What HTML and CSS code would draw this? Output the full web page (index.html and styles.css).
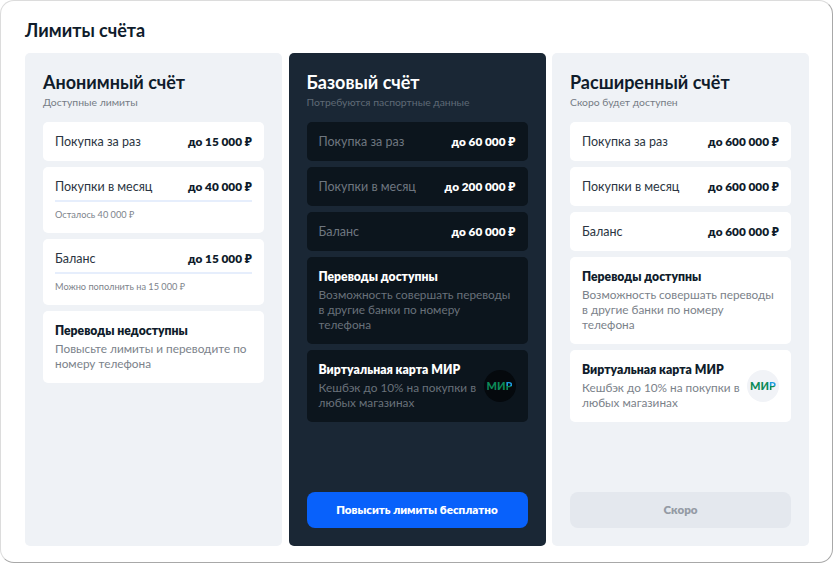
FILE: index.html
```html
<!DOCTYPE html>
<html lang="ru">
<head>
    <meta charset="UTF-8">
    <title>Лимиты счёта</title>
    <link rel="stylesheet" href="styles.css">
</head>
<body>
    <div class="modal">
        <h1 class="modal-title">Лимиты счёта</h1>
        <div class="plans">
            <div class="plan">
                <h2>Анонимный счёт</h2>
                <p class="plan-sub">Доступные лимиты</p>
                <div class="card row"><span>Покупка за раз</span><b>до 15 000 ₽</b></div>
                <div class="card tall">
                    <div class="row"><span>Покупки в месяц</span><b>до 40 000 ₽</b></div>
                    <div class="bar"></div>
                    <p class="note">Осталось 40 000 ₽</p>
                </div>
                <div class="card tall">
                    <div class="row"><span>Баланс</span><b>до 15 000 ₽</b></div>
                    <div class="bar"></div>
                    <p class="note">Можно пополнить на 15 000 ₽</p>
                </div>
                <div class="card info">
                    <h3>Переводы недоступны</h3>
                    <p>Повысьте лимиты и переводите по номеру телефона</p>
                </div>
            </div>

            <div class="plan plan-dark">
                <h2>Базовый счёт</h2>
                <p class="plan-sub">Потребуются паспортные данные</p>
                <div class="card row"><span>Покупка за раз</span><b>до 60 000 ₽</b></div>
                <div class="card row"><span>Покупки в месяц</span><b>до 200 000 ₽</b></div>
                <div class="card row"><span>Баланс</span><b>до 60 000 ₽</b></div>
                <div class="card info">
                    <h3>Переводы доступны</h3>
                    <p>Возможность совершать переводы в другие банки по номеру телефона</p>
                </div>
                <div class="card info with-logo">
                    <div>
                        <h3>Виртуальная карта МИР</h3>
                        <p>Кешбэк до 10% на покупки в любых магазинах</p>
                    </div>
                    <div class="mir">
                        <span class="mir-text">МИ<span class="mir-flag">Р</span></span>
                    </div>
                </div>
                <button class="btn btn-primary">Повысить лимиты бесплатно</button>
            </div>

            <div class="plan">
                <h2>Расширенный счёт</h2>
                <p class="plan-sub">Скоро будет доступен</p>
                <div class="card row"><span>Покупка за раз</span><b>до 600 000 ₽</b></div>
                <div class="card row"><span>Покупки в месяц</span><b>до 600 000 ₽</b></div>
                <div class="card row"><span>Баланс</span><b>до 600 000 ₽</b></div>
                <div class="card info">
                    <h3>Переводы доступны</h3>
                    <p>Возможность совершать переводы в другие банки по номеру телефона</p>
                </div>
                <div class="card info with-logo">
                    <div>
                        <h3>Виртуальная карта МИР</h3>
                        <p>Кешбэк до 10% на покупки в любых магазинах</p>
                    </div>
                    <div class="mir">
                        <span class="mir-text">МИ<span class="mir-flag">Р</span></span>
                    </div>
                </div>
                <button class="btn btn-disabled">Скоро</button>
            </div>
        </div>
    </div>
</body>
</html>
```

FILE: styles.css
```css
* {
    box-sizing: border-box;
}
html, body {
    margin: 0;
    height: 100%;
    overflow: hidden;
}
body {
    background-color: #fff;
    color: #0f1c2b;
    font-family: Lato, "Noto Sans", sans-serif;
}
.modal {
    height: 563px;
    width: 833px;
    padding: 19px 22px 16px 24px;
    border: 1px solid #dcdcdc;
    border-right-color: #a8a8a8;
    border-bottom-color: #a8a8a8;
    border-radius: 14px;
    background-color: #fff;
    display: flex;
    flex-direction: column;
}
.modal-title {
    margin: 0 0 13px;
    font-size: 18px;
    line-height: 20px;
    font-weight: 700;
}
.plans {
    display: flex;
    gap: 6.5px;
    flex: 1;
}
.plan {
    width: 257px;
    padding: 19px 18px 18px;
    background-color: #eff2f6;
    border-radius: 5px;
    display: flex;
    flex-direction: column;
    gap: 6px;
}
.plan h2 {
    margin: 0;
    font-size: 18px;
    line-height: 20px;
    font-weight: 700;
}
.plan-sub {
    margin: -3px 0 7px;
    font-size: 10.4px;
    line-height: 14px;
    color: #757c85;
}
.card {
    background-color: #fff;
    border-radius: 5px;
    padding: 0 12px;
    font-size: 12.5px;
}
.row {
    display: flex;
    justify-content: space-between;
    align-items: center;
    height: 39px;
    padding-bottom: 1px;
}
.row span {
    color: #2b3542;
}
.row b {
    padding-bottom: 1px;
    font-size: 11.8px;
    font-weight: 800;
}
.tall {
    height: 66px;
}
.bar {
    height: 2px;
    background-color: #e6eefc;
    margin-top: -6px;
}
.note {
    margin: 7px 0 0;
    font-size: 9.2px;
    line-height: 12px;
    color: #7d838b;
}
.info {
    padding: 12px;
}
.info h3 {
    margin: 0 0 2px;
    font-size: 12.2px;
    line-height: 16px;
    font-weight: 800;
}
.info p {
    margin: 0;
    font-size: 11.8px;
    line-height: 15px;
    color: #7b828a;
}
.with-logo {
    display: flex;
    align-items: center;
    gap: 6px;
    padding-right: 12px;
}
.mir {
    flex: none;
    width: 32px;
    height: 32px;
    border-radius: 50%;
    background-color: #f1f3f7;
    display: flex;
    align-items: center;
    justify-content: center;
    padding-bottom: 2px;
}
.mir-text {
    font-size: 11px;
    font-weight: 900;
    color: #0c8a58;
}
.mir-flag {
    background: linear-gradient(180deg, #1d9ee0 0 55%, #0c8a58 55% 100%);
    -webkit-background-clip: text;
    background-clip: text;
    color: transparent;
}
.btn {
    margin-top: auto;
    height: 36px;
    padding-bottom: 3px;
    border: none;
    border-radius: 8px;
    font-family: inherit;
    font-size: 11.6px;
    font-weight: 800;
}
.btn-primary {
    background-color: #0861fb;
    color: #fff;
}
.btn-disabled {
    background-color: #e4e8ee;
    color: #949ba5;
}
.plan-dark {
    background-color: #1a2735;
    color: #fff;
}
.plan-dark .plan-sub {
    color: #5f6a76;
}
.plan-dark .card {
    background-color: #0c151d;
}
.plan-dark .row span {
    color: #6f7780;
}
.plan-dark .info p {
    color: #69717a;
}
.plan-dark .mir {
    background-color: #05090d;
}
```
